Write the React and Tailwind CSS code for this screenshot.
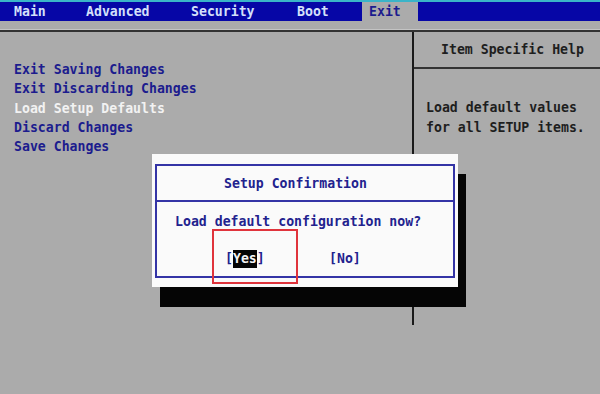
import React from "react";

const mono = { fontFamily: '"DejaVu Sans Mono", "Liberation Mono", monospace' };

export default function App() {
  return (
    <div
      className="relative w-[600px] h-[394px] overflow-hidden bg-[#ababab] text-[13.2px] font-bold"
      style={mono}
    >
      {/* top cyan line */}
      <div className="h-[2px] bg-[#3ab4c8]" />
      {/* menu bar */}
      <div className="flex h-[19px] bg-[#0606a6] text-[#d4e0fa] leading-[19px]">
        <div className="pl-[14px] w-[86px]">Main</div>
        <div className="w-[105px]">Advanced</div>
        <div className="w-[106px]">Security</div>
        <div className="w-[65px]">Boot</div>
        <div className="w-[56px] bg-[#ababab] text-[#1c1c8e] pl-[7px]">Exit</div>
        <div className="flex-1" />
      </div>
      {/* separator */}
      <div className="h-[8px]" />
      <div className="h-[1px] bg-[#c4c4c4]" />
      <div className="h-[2px] bg-[#333333]" />
      {/* main area */}
      <div className="flex h-[293px]">
        <div className="w-[412px] pl-[14px] pt-[28px] leading-[19.3px] text-[#1c1c8e]">
          <div>Exit Saving Changes</div>
          <div>Exit Discarding Changes</div>
          <div className="text-[#f2f2f2]">Load Setup Defaults</div>
          <div>Discard Changes</div>
          <div>Save Changes</div>
        </div>
        <div className="flex-1 border-l-2 border-[#1a1a1a] flex flex-col text-[#1e1e1e]">
          <div className="h-[37px] flex items-center pl-[27px] border-b-2 border-[#333333]">
            Item Specific Help
          </div>
          <div className="pl-[12px] pt-[29px] leading-[20px]">
            <div>Load default values</div>
            <div>for all SETUP items.</div>
          </div>
        </div>
      </div>

      {/* dialog overlay */}
      <div className="absolute left-[152px] top-[154px] w-[306px] h-[133px] bg-[#fafafa] shadow-[8px_20px_0_#050505] text-[#22228e]">
        <div className="absolute left-[3px] right-[3px] top-[10px] bottom-[9px] border-2 border-[#3434a6] flex flex-col">
          <div className="h-[36px] border-b-2 border-[#3434a6] flex items-center pl-[67px] pt-[2px]">
            Setup Confirmation
          </div>
          <div className="pl-[18px] pt-[10px] leading-[20px]">Load default configuration now?</div>
          <div className="flex pl-[68px] pt-[18px] leading-[18px]">
            <div className="w-[104px] flex">
              <span>[</span>
              <span className="bg-[#050505] text-[#f4f4f4]">Yes</span>
              <span>]</span>
            </div>
            <div>[No]</div>
          </div>
        </div>
      </div>

      {/* red highlight box */}
      <div className="absolute left-[212px] top-[229px] w-[86px] h-[55px] border-2 border-[#e0343c]" />
    </div>
  );
}
